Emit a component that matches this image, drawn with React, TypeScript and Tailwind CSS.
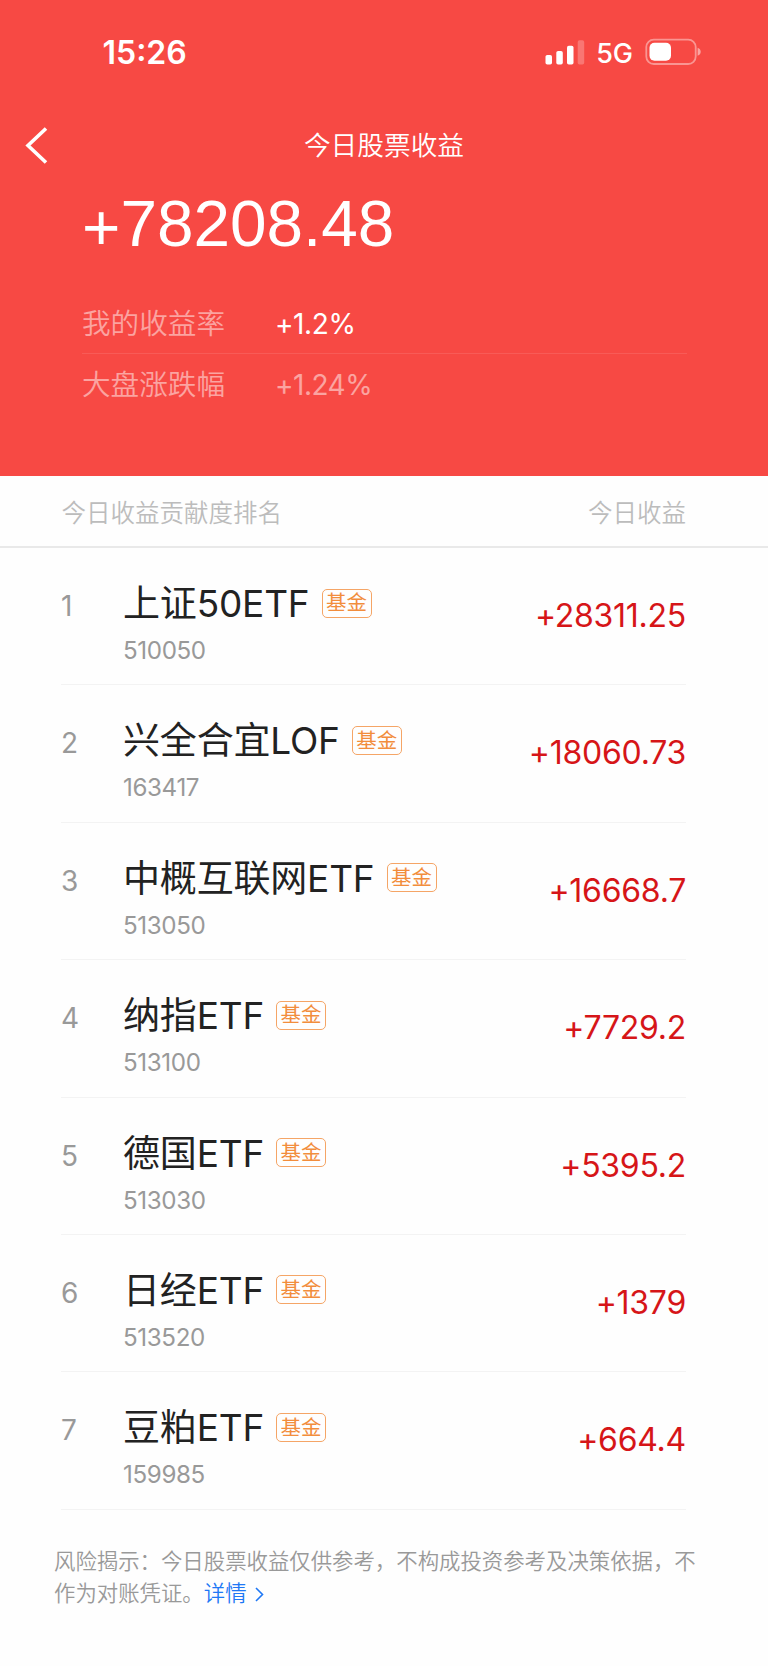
const HOLDINGS = [
  { name: '上证50ETF', code: '510050', profit: '+28311.25' },
  { name: '兴全合宜LOF', code: '163417', profit: '+18060.73' },
  { name: '中概互联网ETF', code: '513050', profit: '+16668.7' },
  { name: '纳指ETF', code: '513100', profit: '+7729.2' },
  { name: '德国ETF', code: '513030', profit: '+5395.2' },
  { name: '日经ETF', code: '513520', profit: '+1379' },
  { name: '豆粕ETF', code: '159985', profit: '+664.4' },
]

function StatusBar() {
  return (
    <div className="flex h-[105px] items-center justify-between pr-[66px] pl-[102.5px]">
      <span className="text-[32px] leading-none font-semibold">15:26</span>
      <div className="flex items-center">
        {/* Signal */}
        <svg width="40" height="26" viewBox="0 0 40 26" fill="currentColor">
          <rect x="0.5" y="15" width="6.5" height="9.5" rx="1.8" />
          <rect x="11.3" y="11" width="6.5" height="13.5" rx="1.8" />
          <rect x="22" y="5.8" width="6.5" height="18.7" rx="1.8" />
          <rect x="32.7" y="0.2" width="6.5" height="24.3" rx="1.8" opacity="0.25" />
        </svg>
        <span className="ml-[11px] pt-0.5 text-[27px] leading-none font-medium">5G</span>
        {/* Battery */}
        <svg width="57" height="28" viewBox="0 0 57 28" fill="none" className="-mt-0.5 ml-3">
          <rect x="1.3" y="1.6" width="49.4" height="24.4" rx="7.5" stroke="currentColor" strokeWidth="1.8" opacity="0.42" />
          <rect x="4.5" y="4.8" width="21.5" height="18" rx="5" fill="currentColor" />
          <path d="M52.6 9.8c2.1.7 3.1 2.2 3.1 4s-1 3.300-3.100 4z" fill="currentColor" opacity="0.5" />
        </svg>
      </div>
    </div>
  )
}

function Header() {
  return (
    <header className="h-[476px] bg-[#f74944] text-white">
      <StatusBar />
      <div className="grid h-20 grid-cols-[1fr_auto_1fr] items-center">
        <svg width="24" height="38" viewBox="0 0 24 38" fill="none" className="ml-[25px]" aria-label="返回">
          <path d="M21 2.500L3 19.500L21 36.500" stroke="currentColor" strokeWidth="3.6" />
        </svg>
        <h1 className="pt-px text-[26.700px] leading-none font-[350]">今日股票收益</h1>
      </div>
      <div className="ml-[82px] h-[109px] pt-[3px] font-['Liberation_Sans',sans-serif] text-[65.700px] leading-[72px]">
        <span className="inline-block translate-y-1">+</span>78208.48
      </div>
      <dl className="mr-[81px] ml-[82px] text-[28.600px] font-[350]">
        <div className="flex h-[60px] items-center border-b border-white/10">
          <dt className="w-[193px] pt-0.5 text-white/50">我的收益率</dt>
          <dd className="text-[28px] font-[380] tracking-[-0.015em]">+1.2%</dd>
        </div>
        <div className="flex h-[62px] items-center text-white/50">
          <dt className="w-[193px] pt-px">大盘涨跌幅</dt>
          <dd className="text-[28px] font-[380] tracking-[-0.018em]">+1.24%</dd>
        </div>
      </dl>
    </header>
  )
}

export default function App() {
  return (
    <div className="min-h-[1666px] bg-[#fefefe] font-['Inter','Noto_Sans_CJK_SC',sans-serif]">
      <Header />
      <div className="flex h-[72px] items-center justify-between border-b-2 border-[#e9e9e9] pt-1 pr-[82px] pl-[61.500px] text-[24.500px] font-[350] text-[#bcbcbc]">
        <span>今日收益贡献度排名</span>
        <span>今日收益</span>
      </div>
      <ul className="mr-[82px] ml-[61px]">
        {HOLDINGS.map(({ name, code, profit }, i) => (
          <li key={code} className="flex h-[137.400px] border-b border-[#f3f3f3]">
            <span className="w-[62px] pt-[44px] text-[28px] leading-7 font-[370] text-[#999999]">{i + 1}</span>
            <div className="flex-1 pt-[32px]">
              <div className="flex h-12 items-center gap-[12px]">
                <span className="text-[37px] leading-[48px] font-[390] tracking-[-0.005em] text-[#222222]">{name}</span>
                <span className="mb-0.5 flex h-[29px] w-[50px] items-center justify-center rounded-[5px] border-[1.500px] border-[#f5a566] pt-px text-[20.500px] leading-none font-normal text-[#f28d3c]">
                  基金
                </span>
              </div>
              <div className="pt-[9px] text-[24.200px] leading-7 font-[370] tracking-[-0.016em] text-[#999999]">{code}</div>
            </div>
            <span className="pt-[48px] text-[32px] leading-10 font-[390] tracking-[-0.008em] text-[#d61518]">{profit}</span>
          </li>
        ))}
      </ul>
      <p className="mt-[35px] mr-[70px] ml-[54px] text-[21.400px] leading-8 font-[350] text-[#999999]">
        风险揭示：今日股票收益仅供参考，不构成投资参考及决策依据，不作为对账凭证。
        <a href="#" className="text-[#1f78f5]">
          详情
          <svg width="9" height="15" viewBox="0 0 9 15" fill="none" className="ml-2 inline-block align-[-1px]">
            <path d="M1 1L7.500 7.500L1 14" stroke="currentColor" strokeWidth="1.6" />
          </svg>
        </a>
      </p>
    </div>
  )
}
